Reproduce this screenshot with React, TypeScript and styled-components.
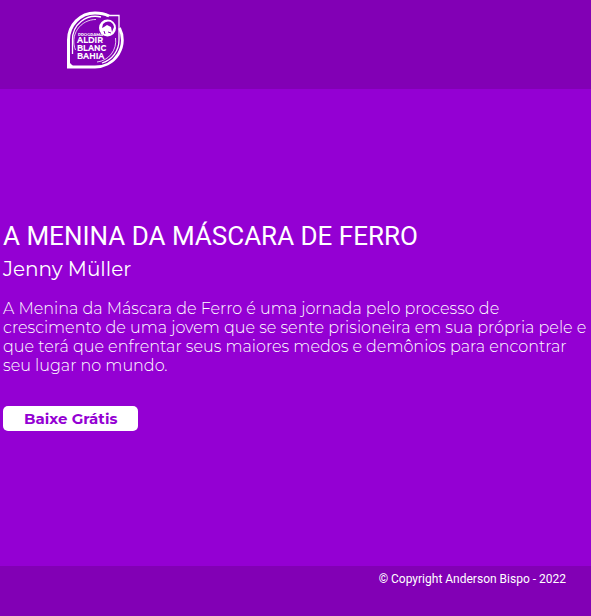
import React from "react";
import styled, { createGlobalStyle } from "styled-components";

const GlobalStyle = createGlobalStyle`
  * { box-sizing: border-box; margin: 0; padding: 0; }
  body { background: #9400d3; color: #fff; font-family: Montserrat, Inter, sans-serif; }
`;

const Page = styled.div`
  display: flex;
  flex-direction: column;
  min-height: 100vh;
`;

const Header = styled.header`
  display: flex;
  align-items: flex-start;
  padding: 10px 65px 19px;
  background: #8200b5;
`;

const LogoLink = styled.a`
  display: block;
  line-height: 0;
  color: #fff;
`;

const Main = styled.main`
  flex: 1;
  display: flex;
  flex-direction: column;
  justify-content: center;
  align-items: flex-start;
  padding: 0 3px 4px;
`;

const Title = styled.h1`
  font: 400 26px/32px Roboto, sans-serif;
`;

const Author = styled.h2`
  margin-top: 5px;
  font-size: 20px;
  line-height: 24px;
  font-weight: 400;
`;

const Summary = styled.p`
  margin: 18px 0 31px;
  font-size: 16px;
  line-height: normal;
  font-weight: 300;
`;

const DownloadButton = styled.button`
  padding: 0 21px;
  border: 0;
  border-radius: 5px;
  background: #fff;
  color: #9400d3;
  font: 700 15px/25px Montserrat, Inter, sans-serif;
  cursor: pointer;
`;

const Footer = styled.footer`
  min-height: 50px;
  padding: 6px 25px;
  background: #8200b5;
  text-align: right;
  font: 400 12px/14px Roboto, sans-serif;
`;

function Logo() {
  return (
    <svg width="60" height="60" viewBox="0 0 60 60" fill="none" stroke="currentColor" role="img" aria-label="Programa Aldir Blanc Bahia">
      <path d="M3.500 57V30A26.500 27 0 0 1 30 3Q38 3 44 6" strokeWidth="3" />
      <path d="M2 57H30A27.500 27 0 0 0 54.500 18" strokeWidth="2.800" />
      <path d="M2 50L10 58H2Z" fill="currentColor" stroke="none" />
      <path d="M7.500 44V30A23 23 0 0 1 36 7M41 5.500H54V30A24 24 0 0 1 37 53" strokeWidth="1.300" />
      <path d="M10.500 40A22 22 0 0 1 31 9.500M50.500 28A21 21 0 0 1 32 52" strokeWidth="0.800" />
      <circle cx="42.500" cy="18" r="8.500" fill="currentColor" stroke="none" />
      <path d="M38 14Q40 11.500 43 11.500Q48 11.500 49 17L47 22L46 17L42 15L39 17L37 18Z" fill="#8200b5" stroke="none" />
      <path d="M39 21L40 24M43 22L46 23" stroke="#8200b5" strokeWidth="1" />
      <g fill="currentColor" stroke="none" fontFamily="Montserrat, Inter, sans-serif" fontWeight="700">
        <text x="13" y="26" fontSize="4">PROGRAMA</text>
        <text x="12" y="33" fontSize="8">ALDIR</text>
        <text x="12" y="41" fontSize="8">BLANC</text>
        <text x="12" y="49" fontSize="8">BAHIA</text>
      </g>
    </svg>
  );
}

export default function App() {
  return (
    <>
      <GlobalStyle />
      <Page>
        <Header>
          <LogoLink href="#"><Logo /></LogoLink>
        </Header>
        <Main>
          <Title>A MENINA DA MÁSCARA DE FERRO</Title>
          <Author>Jenny Müller</Author>
          <Summary>
            A Menina da Máscara de Ferro é uma jornada pelo processo de crescimento de uma jovem que se sente prisioneira em sua própria pele e que terá que enfrentar seus maiores medos e demônios para encontrar seu lugar no mundo.
          </Summary>
          <DownloadButton type="button">Baixe Grátis</DownloadButton>
        </Main>
        <Footer>© Copyright Anderson Bispo - 2022</Footer>
      </Page>
    </>
  );
}
